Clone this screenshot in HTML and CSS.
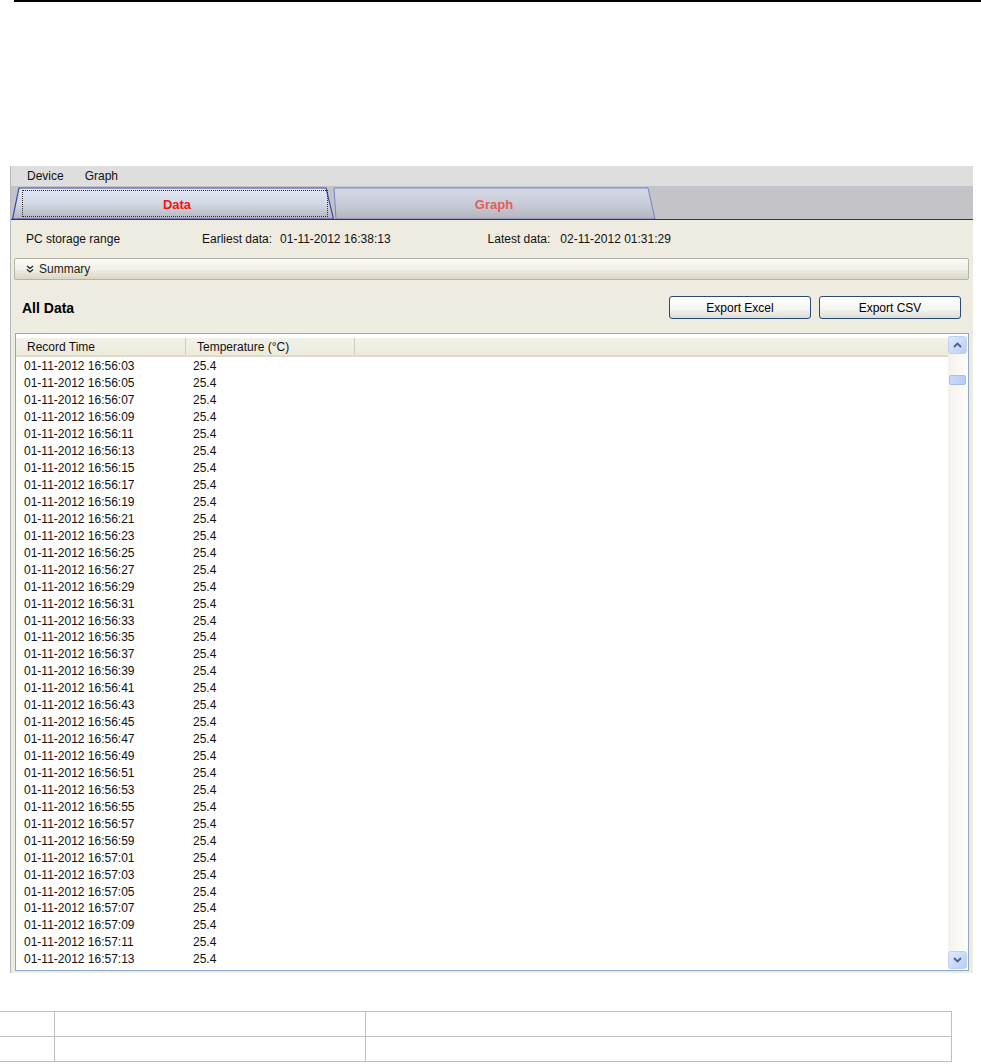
FILE: index.html
```html
<!DOCTYPE html>
<html>
<head>
<meta charset="utf-8">
<link rel="stylesheet" href="styles.css">
</head>
<body>
<div class="topline"></div>
<div class="figure">
  <div class="app">
    <div class="menubar"><span class="menu-item">Device</span><span class="menu-item">Graph</span></div>
    <div class="tabstrip">
      <div class="tab tab-data">
        <svg class="tab-bg" viewBox="0 0 322 33" preserveAspectRatio="none">
          <defs>
            <linearGradient id="gdata" x1="0" y1="0" x2="0" y2="1">
              <stop offset="0" stop-color="#e3e9f4"/>
              <stop offset="0.5" stop-color="#d2d9e6"/>
              <stop offset="1" stop-color="#b4b4bc"/>
            </linearGradient>
          </defs>
          <polygon points="0.5,33 7,1 314,1 321.5,33" fill="url(#gdata)" stroke="#3a44a8" stroke-width="1.2"/>
        </svg>
        <span class="tab-focus"></span>
        <span class="tab-label tab-label-data">Data</span>
      </div>
      <div class="tab tab-graph">
        <svg class="tab-bg" viewBox="0 0 324 33" preserveAspectRatio="none">
          <defs>
            <linearGradient id="ggraph" x1="0" y1="0" x2="0" y2="1">
              <stop offset="0" stop-color="#d5dae6"/>
              <stop offset="0.5" stop-color="#c8ccd8"/>
              <stop offset="1" stop-color="#b6b5bd"/>
            </linearGradient>
          </defs>
          <polygon points="4,33 2,1 316,1 323,33" fill="url(#ggraph)" stroke="#7a80c0" stroke-width="1"/>
        </svg>
        <span class="tab-label">Graph</span>
      </div>
    </div>
    <div class="inforow">
      <span class="info-title">PC storage range</span>
      <span class="info-label">Earliest data:</span><span class="info-value">01-11-2012 16:38:13</span>
      <span class="info-label info-latest">Latest data:</span><span class="info-value">02-11-2012 01:31:29</span>
    </div>
    <div class="summary">
      <svg class="chev" width="8" height="8" viewBox="0 0 8 8"><path d="M1 1 L4 3.5 L7 1 M1 4.5 L4 7 L7 4.5" fill="none" stroke="#222" stroke-width="1.3"/></svg>
      <span>Summary</span>
    </div>
    <div class="datahead">
      <h2 class="datatitle">All Data</h2>
      <div class="buttons">
        <button class="btn">Export Excel</button>
        <button class="btn">Export CSV</button>
      </div>
    </div>
    <div class="grid">
      <div class="grid-main">
        <div class="grid-header">
          <div class="hcell hc1">Record Time</div>
          <div class="hcell hc2">Temperature (°C)</div>
          <div class="hcell hc3"></div>
        </div>
        <div class="grid-body" id="rows">
          <div class="row"><span class="c1">01-11-2012 16:56:03</span><span class="c2">25.4</span></div>
          <div class="row"><span class="c1">01-11-2012 16:56:05</span><span class="c2">25.4</span></div>
          <div class="row"><span class="c1">01-11-2012 16:56:07</span><span class="c2">25.4</span></div>
          <div class="row"><span class="c1">01-11-2012 16:56:09</span><span class="c2">25.4</span></div>
          <div class="row"><span class="c1">01-11-2012 16:56:11</span><span class="c2">25.4</span></div>
          <div class="row"><span class="c1">01-11-2012 16:56:13</span><span class="c2">25.4</span></div>
          <div class="row"><span class="c1">01-11-2012 16:56:15</span><span class="c2">25.4</span></div>
          <div class="row"><span class="c1">01-11-2012 16:56:17</span><span class="c2">25.4</span></div>
          <div class="row"><span class="c1">01-11-2012 16:56:19</span><span class="c2">25.4</span></div>
          <div class="row"><span class="c1">01-11-2012 16:56:21</span><span class="c2">25.4</span></div>
          <div class="row"><span class="c1">01-11-2012 16:56:23</span><span class="c2">25.4</span></div>
          <div class="row"><span class="c1">01-11-2012 16:56:25</span><span class="c2">25.4</span></div>
          <div class="row"><span class="c1">01-11-2012 16:56:27</span><span class="c2">25.4</span></div>
          <div class="row"><span class="c1">01-11-2012 16:56:29</span><span class="c2">25.4</span></div>
          <div class="row"><span class="c1">01-11-2012 16:56:31</span><span class="c2">25.4</span></div>
          <div class="row"><span class="c1">01-11-2012 16:56:33</span><span class="c2">25.4</span></div>
          <div class="row"><span class="c1">01-11-2012 16:56:35</span><span class="c2">25.4</span></div>
          <div class="row"><span class="c1">01-11-2012 16:56:37</span><span class="c2">25.4</span></div>
          <div class="row"><span class="c1">01-11-2012 16:56:39</span><span class="c2">25.4</span></div>
          <div class="row"><span class="c1">01-11-2012 16:56:41</span><span class="c2">25.4</span></div>
          <div class="row"><span class="c1">01-11-2012 16:56:43</span><span class="c2">25.4</span></div>
          <div class="row"><span class="c1">01-11-2012 16:56:45</span><span class="c2">25.4</span></div>
          <div class="row"><span class="c1">01-11-2012 16:56:47</span><span class="c2">25.4</span></div>
          <div class="row"><span class="c1">01-11-2012 16:56:49</span><span class="c2">25.4</span></div>
          <div class="row"><span class="c1">01-11-2012 16:56:51</span><span class="c2">25.4</span></div>
          <div class="row"><span class="c1">01-11-2012 16:56:53</span><span class="c2">25.4</span></div>
          <div class="row"><span class="c1">01-11-2012 16:56:55</span><span class="c2">25.4</span></div>
          <div class="row"><span class="c1">01-11-2012 16:56:57</span><span class="c2">25.4</span></div>
          <div class="row"><span class="c1">01-11-2012 16:56:59</span><span class="c2">25.4</span></div>
          <div class="row"><span class="c1">01-11-2012 16:57:01</span><span class="c2">25.4</span></div>
          <div class="row"><span class="c1">01-11-2012 16:57:03</span><span class="c2">25.4</span></div>
          <div class="row"><span class="c1">01-11-2012 16:57:05</span><span class="c2">25.4</span></div>
          <div class="row"><span class="c1">01-11-2012 16:57:07</span><span class="c2">25.4</span></div>
          <div class="row"><span class="c1">01-11-2012 16:57:09</span><span class="c2">25.4</span></div>
          <div class="row"><span class="c1">01-11-2012 16:57:11</span><span class="c2">25.4</span></div>
          <div class="row"><span class="c1">01-11-2012 16:57:13</span><span class="c2">25.4</span></div>
        </div>
      </div>
      <div class="scrollbar">
        <div class="sb-btn sb-up"><svg width="9" height="6" viewBox="0 0 9 6"><path d="M1 5 L4.5 1.5 L8 5" fill="none" stroke="#4d6185" stroke-width="1.8"/></svg></div>
        <div class="sb-track"><div class="sb-thumb"></div></div>
        <div class="sb-btn sb-down"><svg width="9" height="6" viewBox="0 0 9 6"><path d="M1 1 L4.5 4.5 L8 1" fill="none" stroke="#4d6185" stroke-width="1.8"/></svg></div>
      </div>
    </div>
  </div>
</div>
<table class="doc-table">
  <tr><td class="d1"></td><td class="d2"></td><td class="d3"></td></tr>
  <tr><td class="d1"></td><td class="d2"></td><td class="d3"></td></tr>
</table>
</body>
</html>
```

FILE: styles.css
```css
html, body {
  margin: 0;
  padding: 0;
  background: #ffffff;
}
body {
  font-family: "Liberation Sans", Arial, sans-serif;
  font-size: 12px;
  color: #000;
  width: 981px;
  height: 1064px;
  overflow: hidden;
}
.topline {
  margin-left: 14px;
  height: 2px;
  background: #000;
}
.figure {
  margin-top: 164px;
  margin-left: 10px;
  width: 963px;
}
.app {
  height: 807px;
  background: #eeebe0;
  border-left: 1px solid #b8b8b8;
  box-sizing: border-box;
  display: flex;
  flex-direction: column;
}
.menubar {
  height: 20px;
  background: #dedede;
  display: flex;
  align-items: center;
  padding-left: 16px;
  gap: 21px;
  font-size: 12px;
  color: #111;
}
.tabstrip {
  height: 34px;
  background: #c4c3c7;
  border-bottom: 1.5px solid #2b2b9a;
  display: flex;
  align-items: flex-end;
  padding-left: 1px;
  box-sizing: border-box;
}
.tab {
  position: relative;
  height: 32px;
  display: flex;
  align-items: center;
  justify-content: center;
  font-weight: bold;
  font-size: 13px;
}
.tab-bg {
  position: absolute;
  left: 0;
  top: 0;
  width: 100%;
  height: 100%;
}
.tab-label {
  position: relative;
  padding-top: 2px;
}
.tab-label-data {
  padding-left: 8px;
}
.tab-data {
  width: 322px;
  z-index: 2;
  color: #ff1010;
}
.tab-graph {
  width: 324px;
  margin-left: -2px;
  color: #e55b5b;
}
.tab-focus {
  position: absolute;
  left: 10px;
  right: 6px;
  top: 3px;
  bottom: 2px;
  border: 1px dotted #333;
}
.inforow {
  height: 38px;
  display: flex;
  align-items: center;
  padding-left: 15px;
  font-size: 12px;
  color: #111;
}
.info-title { width: 176px; }
.info-label { margin-right: 8px; }
.info-latest { margin-left: 97px; margin-right: 10px; }
.summary {
  margin-left: 3px;
  width: 955px;
  height: 22px;
  box-sizing: border-box;
  border: 1px solid #b5b2a6;
  border-radius: 2px;
  background: linear-gradient(#fbfaf6, #f1efe7 50%, #d9d6c6);
  display: flex;
  align-items: center;
  padding-left: 11px;
  gap: 5px;
  font-size: 12px;
  color: #222;
}
.chev { display: block; }
.datahead {
  height: 53px;
  display: flex;
  align-items: center;
  justify-content: space-between;
  padding-left: 11px;
  padding-right: 12px;
}
.datatitle {
  margin: 0;
  font-size: 14px;
  font-weight: bold;
  padding-top: 2px;
}
.buttons {
  display: flex;
  gap: 8px;
  padding-top: 2px;
}
.btn {
  width: 142px;
  height: 23px;
  font-family: "Liberation Sans", Arial, sans-serif;
  font-size: 12px;
  color: #000;
  border: 1px solid #2c4a78;
  border-radius: 3px;
  background: linear-gradient(#ffffff, #f4f4f0 60%, #dcdcd4);
  padding: 0;
}
.grid {
  margin-left: 4px;
  width: 954px;
  height: 638px;
  box-sizing: border-box;
  border: 1px solid #8ea8c8;
  background: #ffffff;
  display: flex;
}
.grid-main {
  flex: 1;
  display: flex;
  flex-direction: column;
  padding-top: 4px;
  overflow: hidden;
}
.grid-header {
  height: 19px;
  display: flex;
  background: linear-gradient(#f3f2ea, #ebeadb);
  border-bottom: 2px solid #dedcc9;
  box-sizing: border-box;
  color: #111;
}
.hcell {
  display: flex;
  align-items: center;
  box-sizing: border-box;
  border-right: 1px solid #cfcdbd;
  padding-left: 11px;
}
.hc1 { width: 170px; }
.hc2 { width: 169px; }
.hc3 { flex: 1; border-right: none; }
.grid-body {
  padding-top: 1px;
}
.row {
  height: 16.95px;
  display: flex;
  align-items: center;
  color: #111;
}
.c1 { width: 169px; padding-left: 8px; }
.scrollbar {
  width: 19px;
  margin-right: 1px;
  margin-top: 2px;
  margin-bottom: 1px;
  display: flex;
  flex-direction: column;
  background: linear-gradient(90deg, #f3f1ec, #fdfdfa);
}
.sb-btn {
  height: 18px;
  box-sizing: border-box;
  border: 1px solid #c0d0f0;
  border-radius: 3px;
  background: linear-gradient(135deg, #e0e9ff, #b9cdf6);
  display: flex;
  align-items: center;
  justify-content: center;
}
.sb-track {
  flex: 1;
  padding-top: 21px;
}
.sb-thumb {
  height: 8px;
  margin: 0 1px;
  border: 1px solid #a8bdee;
  border-radius: 2px;
  background: linear-gradient(90deg, #c9d8fb, #b7ccf7);
}
.doc-table {
  margin-top: 38px;
  border-collapse: collapse;
  width: 952px;
}
.doc-table td {
  border: 1px solid #bfbfbf;
  height: 24px;
  padding: 0;
}
.d1 { width: 54px; border-left: none !important; }
.d2 { width: 310px; }
```
